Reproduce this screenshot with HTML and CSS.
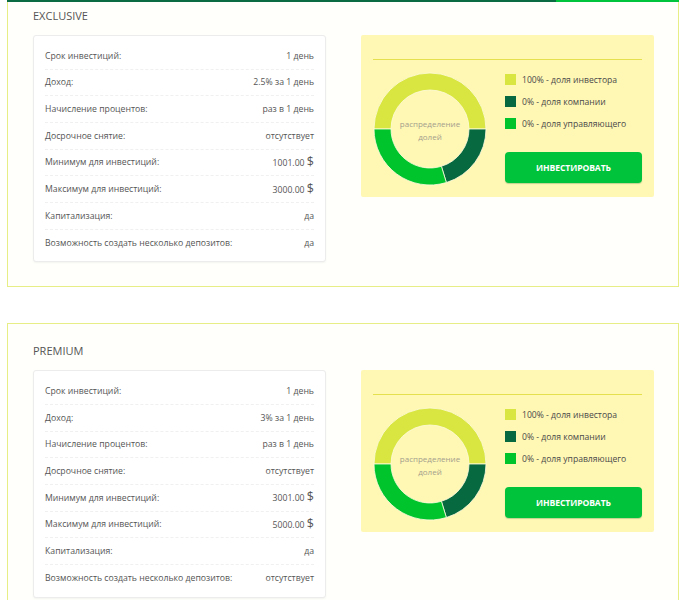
FILE: index.html
```html
<!DOCTYPE html>
<html lang="ru">
<head>
<meta charset="utf-8">
<title>Тарифы</title>
<link rel="stylesheet" href="styles.css">
</head>
<body>
<div class="page">
  <div class="topbar"><span class="topbar-dark"></span><span class="topbar-light"></span></div>

  <section class="card card--first">
    <h2 class="card-title">EXCLUSIVE</h2>
    <div class="card-body">
      <div class="info">
        <div class="row"><span class="label">Срок инвестиций:</span><span class="value">1 день</span></div>
        <div class="row"><span class="label">Доход:</span><span class="value">2.5% за 1 день</span></div>
        <div class="row"><span class="label">Начисление процентов:</span><span class="value">раз в 1 день</span></div>
        <div class="row"><span class="label">Досрочное снятие:</span><span class="value">отсутствует</span></div>
        <div class="row"><span class="label">Минимум для инвестиций:</span><span class="value">1001.00 <span class="cur">$</span></span></div>
        <div class="row"><span class="label">Максимум для инвестиций:</span><span class="value">3000.00 <span class="cur">$</span></span></div>
        <div class="row"><span class="label">Капитализация:</span><span class="value">да</span></div>
        <div class="row"><span class="label">Возможность создать несколько депозитов:</span><span class="value">да</span></div>
      </div>
      <div class="share">
        <div class="share-head"></div>
        <div class="share-body">
          <div class="donut">
            <svg class="donut-svg" width="114" height="114" viewBox="0 0 114 114">
              <path class="seg seg-invest" d="M1 57 A56 56 0 0 1 113 57 L96 57 A39 39 0 0 0 18 57 Z"/>
              <path class="seg seg-company" d="M113 57 A56 56 0 0 1 73.37 110.55 L68.40 94.30 A39 39 0 0 0 96 57 Z"/>
              <path class="seg seg-manager" d="M73.37 110.55 A56 56 0 0 1 1 57 L18 57 A39 39 0 0 0 68.40 94.30 Z"/>
            </svg>
            <div class="donut-label">распределение<br>долей</div>
          </div>
          <div class="side">
            <ul class="legend">
              <li><span class="sw sw-invest"></span>100% - доля инвестора</li>
              <li><span class="sw sw-company"></span>0% - доля компании</li>
              <li><span class="sw sw-manager"></span>0% - доля управляющего</li>
            </ul>
            <button class="btn">ИНВЕСТИРОВАТЬ</button>
          </div>
        </div>
      </div>
    </div>
  </section>

  <section class="card">
    <h2 class="card-title">PREMIUM</h2>
    <div class="card-body">
      <div class="info">
        <div class="row"><span class="label">Срок инвестиций:</span><span class="value">1 день</span></div>
        <div class="row"><span class="label">Доход:</span><span class="value">3% за 1 день</span></div>
        <div class="row"><span class="label">Начисление процентов:</span><span class="value">раз в 1 день</span></div>
        <div class="row"><span class="label">Досрочное снятие:</span><span class="value">отсутствует</span></div>
        <div class="row"><span class="label">Минимум для инвестиций:</span><span class="value">3001.00 <span class="cur">$</span></span></div>
        <div class="row"><span class="label">Максимум для инвестиций:</span><span class="value">5000.00 <span class="cur">$</span></span></div>
        <div class="row"><span class="label">Капитализация:</span><span class="value">да</span></div>
        <div class="row"><span class="label">Возможность создать несколько депозитов:</span><span class="value">отсутствует</span></div>
      </div>
      <div class="share">
        <div class="share-head"></div>
        <div class="share-body">
          <div class="donut">
            <svg class="donut-svg" width="114" height="114" viewBox="0 0 114 114">
              <path class="seg seg-invest" d="M1 57 A56 56 0 0 1 113 57 L96 57 A39 39 0 0 0 18 57 Z"/>
              <path class="seg seg-company" d="M113 57 A56 56 0 0 1 73.37 110.55 L68.40 94.30 A39 39 0 0 0 96 57 Z"/>
              <path class="seg seg-manager" d="M73.37 110.55 A56 56 0 0 1 1 57 L18 57 A39 39 0 0 0 68.40 94.30 Z"/>
            </svg>
            <div class="donut-label">распределение<br>долей</div>
          </div>
          <div class="side">
            <ul class="legend">
              <li><span class="sw sw-invest"></span>100% - доля инвестора</li>
              <li><span class="sw sw-company"></span>0% - доля компании</li>
              <li><span class="sw sw-manager"></span>0% - доля управляющего</li>
            </ul>
            <button class="btn">ИНВЕСТИРОВАТЬ</button>
          </div>
        </div>
      </div>
    </div>
  </section>
</div>
</body>
</html>
```
FILE: styles.css
```css
* { box-sizing: border-box; }
html, body { margin: 0; padding: 0; background: #ffffff; }
body {
  font-family: "Open Sans", "Noto Sans", "DejaVu Sans", sans-serif;
  color: #555;
}
.page {
  width: 672px;
  margin-left: 7px;
}
.topbar {
  display: flex;
  height: 2px;
}
.topbar-dark { width: 549px; background: #0a6a42; }
.topbar-light { flex: 1; background: #00c43c; }

.card {
  background: #fffffb;
  border: 1px solid #e8ee86;
  padding: 19px 24px 24px 25px;
  margin-bottom: 36px;
}
.card--first {
  border-top: none;
  padding-top: 6px;
}
.card-title {
  margin: 0 0 11px 0;
  font-size: 11px;
  line-height: 16px;
  font-weight: 400;
  color: #555;
}
.card-body {
  display: grid;
  grid-template-columns: 293px 293px;
  column-gap: 35px;
  align-items: start;
}

/* info table */
.info {
  background: #fff;
  border: 1px solid #ececec;
  border-radius: 3px;
  box-shadow: 0 1px 2px rgba(0,0,0,0.05);
  padding: 7px 11px 5px 11px;
}
.row {
  display: flex;
  justify-content: space-between;
  align-items: center;
  height: 26.67px;
  border-bottom: 1px dashed #f0f0f0;
  font-size: 8.7px;
  color: #555;
}
.row:last-child { border-bottom: none; }
.value { color: #555; }
.cur { font-size: 12.5px; color: #555; line-height: 1; }

/* share panel */
.share {
  background: #fff7b4;
  border-radius: 2px;
  padding: 12px 12px 11px 12px;
}
.share-head {
  height: 13px;
  border-bottom: 1px solid #e4e04e;
}
.share-body {
  display: flex;
  align-items: flex-start;
  padding-top: 12px;
}
.donut {
  display: grid;
  width: 114px;
  height: 114px;
  flex: none;
}
.donut-svg { grid-area: 1 / 1; display: block; }
.donut-label {
  grid-area: 1 / 1;
  align-self: center;
  justify-self: center;
  text-align: center;
  font-size: 8px;
  line-height: 13px;
  color: #a3a08c;
  margin-top: 2px;
}
.seg { stroke: #fffbe0; stroke-width: 0.8; }
.seg-invest { fill: #d9e540; }
.seg-company { fill: #07693f; }
.seg-manager { fill: #00c42c; }

.side {
  margin-left: 18px;
  padding-top: 2px;
  flex: 1;
  display: flex;
  flex-direction: column;
}
.legend {
  list-style: none;
  margin: 0;
  padding: 0;
}
.legend li {
  display: flex;
  align-items: center;
  height: 11px;
  margin-bottom: 11px;
  font-size: 8.6px;
  color: #4a4a4a;
}
.sw {
  width: 11px;
  height: 11px;
  margin-right: 6px;
  flex: none;
}
.sw-invest { background: #d9e540; }
.sw-company { background: #07693f; }
.sw-manager { background: #00c42c; }
.btn {
  margin-top: 12px;
  height: 31px;
  width: 100%;
  border: none;
  border-radius: 4px;
  background: #00c33c;
  box-shadow: 0 1px 1px rgba(0,100,30,0.25);
  color: #fff;
  font-family: "Open Sans", "Noto Sans", sans-serif;
  font-weight: 700;
  font-size: 8.6px;
  letter-spacing: -0.1px;
  cursor: pointer;
}
```
